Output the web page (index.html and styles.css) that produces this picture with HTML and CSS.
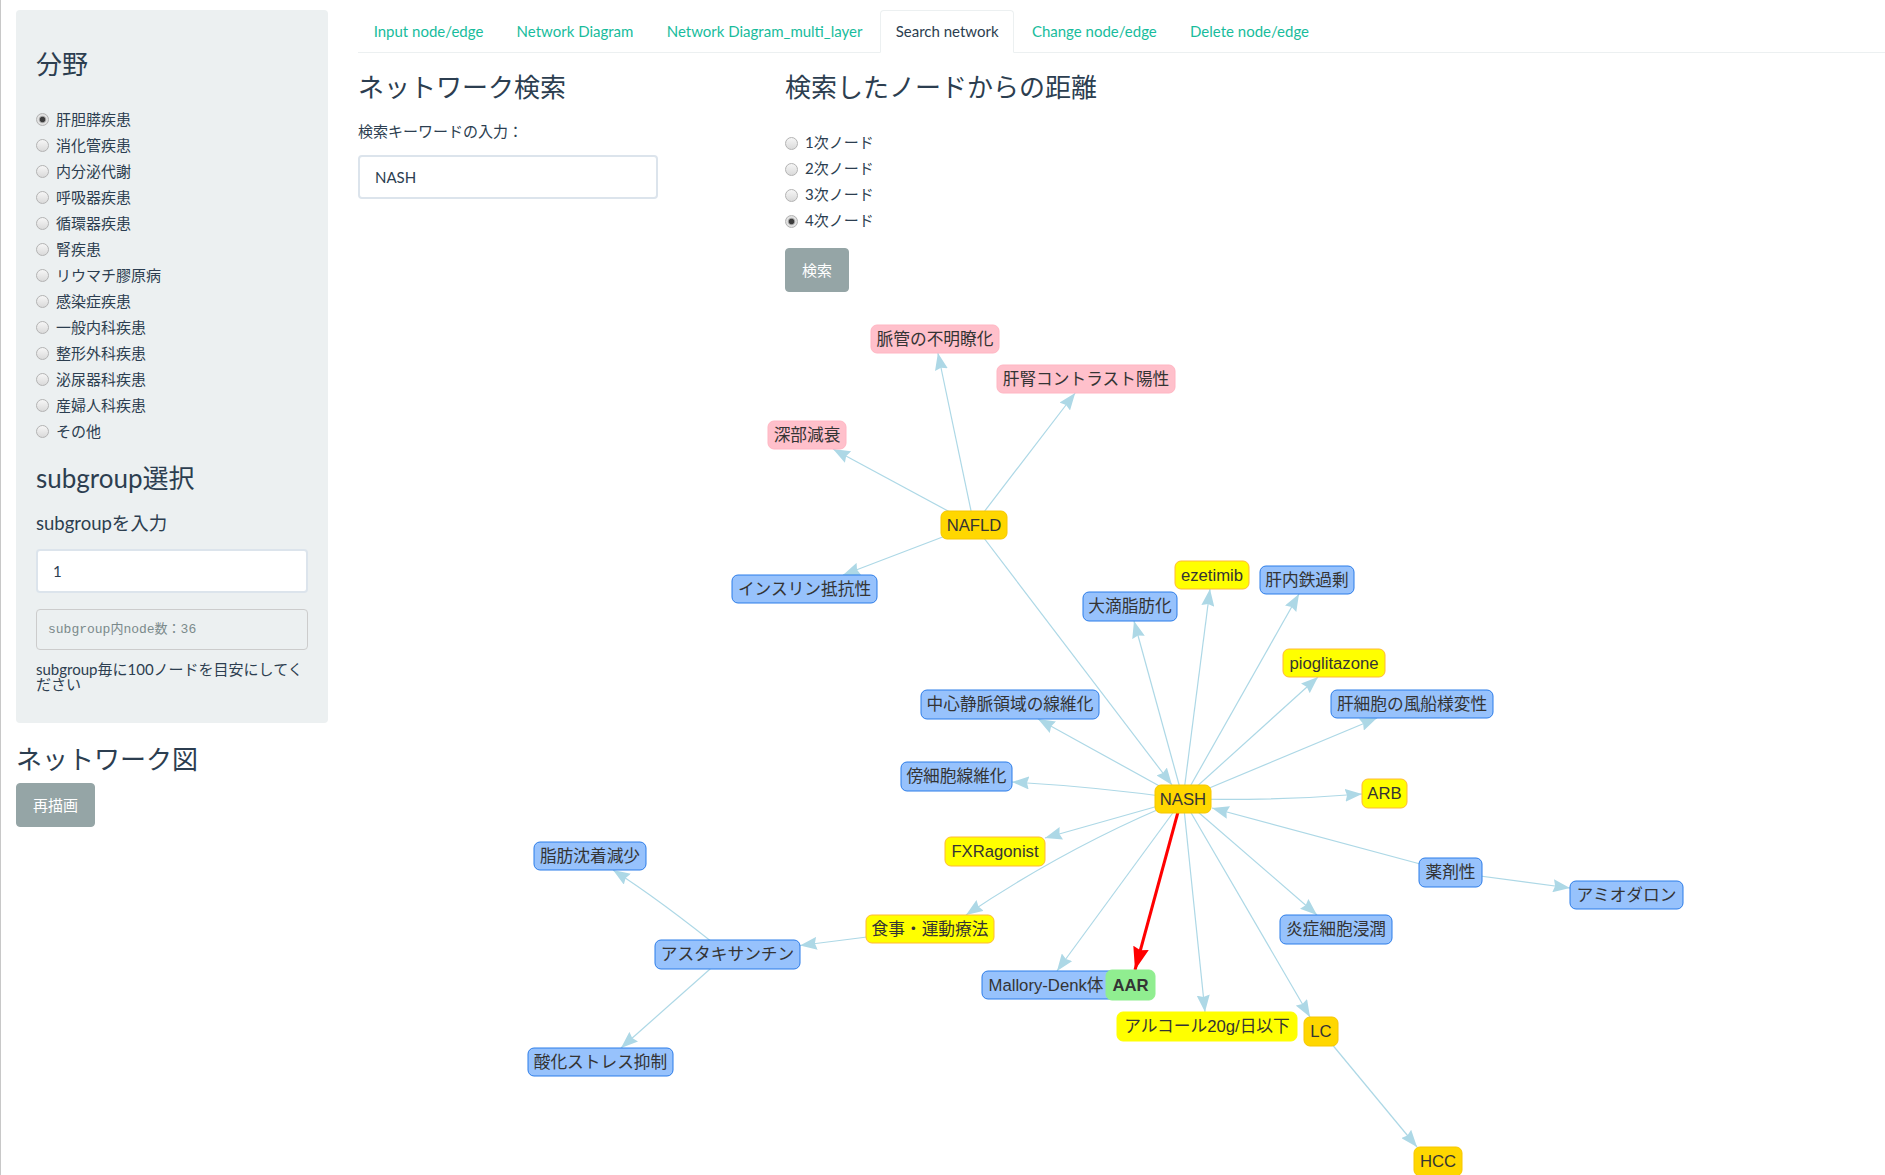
FILE: index.html
```html
<!DOCTYPE html>
<html lang="ja">
<head>
<meta charset="utf-8">
<title>Search network</title>
<link rel="stylesheet" href="styles.css">
</head>
<body>
<div class="page">
  <aside class="sidebar">
    <form class="well">
      <h3 class="well-title">分野</h3>
      <div class="side-radios">
        <label class="radio"><input type="radio" name="field" checked><span>肝胆膵疾患</span></label>
        <label class="radio"><input type="radio" name="field"><span>消化管疾患</span></label>
        <label class="radio"><input type="radio" name="field"><span>内分泌代謝</span></label>
        <label class="radio"><input type="radio" name="field"><span>呼吸器疾患</span></label>
        <label class="radio"><input type="radio" name="field"><span>循環器疾患</span></label>
        <label class="radio"><input type="radio" name="field"><span>腎疾患</span></label>
        <label class="radio"><input type="radio" name="field"><span>リウマチ膠原病</span></label>
        <label class="radio"><input type="radio" name="field"><span>感染症疾患</span></label>
        <label class="radio"><input type="radio" name="field"><span>一般内科疾患</span></label>
        <label class="radio"><input type="radio" name="field"><span>整形外科疾患</span></label>
        <label class="radio"><input type="radio" name="field"><span>泌尿器科疾患</span></label>
        <label class="radio"><input type="radio" name="field"><span>産婦人科疾患</span></label>
        <label class="radio"><input type="radio" name="field"><span>その他</span></label>
      </div>
      <h3 class="sub-title">subgroup選択</h3>
      <label class="big-label">subgroupを入力</label>
      <input class="form-control side-input" type="text" value="1">
      <pre class="verb">subgroup内node数：36</pre>
      <p class="note">subgroup毎に100ノードを目安にしてください</p>
    </form>
    <h3 class="side-head">ネットワーク図</h3>
    <button class="btn" type="button">再描画</button>
  </aside>

  <main class="main">
    <ul class="tabs">
      <li><a href="#">Input node/edge</a></li>
      <li><a href="#">Network Diagram</a></li>
      <li><a href="#">Network Diagram_multi_layer</a></li>
      <li class="active"><a href="#">Search network</a></li>
      <li><a href="#">Change node/edge</a></li>
      <li><a href="#">Delete node/edge</a></li>
    </ul>

    <div class="search-row">
      <div class="col-left">
        <h3 class="col-title">ネットワーク検索</h3>
        <label class="kw-label">検索キーワードの入力：</label>
        <input class="form-control kw-input" type="text" value="NASH">
      </div>
      <div class="col-right">
        <h3 class="col-title">検索したノードからの距離</h3>
        <div class="dist-radios">
          <label class="radio"><input type="radio" name="dist"><span>1次ノード</span></label>
          <label class="radio"><input type="radio" name="dist"><span>2次ノード</span></label>
          <label class="radio"><input type="radio" name="dist"><span>3次ノード</span></label>
          <label class="radio"><input type="radio" name="dist" checked><span>4次ノード</span></label>
        </div>
        <button class="btn search-btn" type="button">検索</button>
      </div>
    </div>

    <svg class="network" width="1527" height="875" viewBox="358 300 1527 875" xmlns="http://www.w3.org/2000/svg">
      <defs>
        <marker id="arr" viewBox="0 -6.5 17 13" refX="17" refY="0" markerWidth="17" markerHeight="13" markerUnits="userSpaceOnUse" orient="auto">
          <path d="M0,-6.5 L17,0 L0,6.5 L2,0 Z" class="arrow-head"/>
        </marker>
        <marker id="arr-red" viewBox="0 -8 23 16" refX="23" refY="0" markerWidth="23" markerHeight="16" markerUnits="userSpaceOnUse" orient="auto">
          <path d="M0,-8 L23,0 L0,8 L2.5,0 Z" class="arrow-red"/>
        </marker>
      </defs>

      <g class="edges">
        <line class="edge" x1="974" y1="525" x2="937.9" y2="353"/>
        <line class="edge" x1="974" y1="525" x2="1075.2" y2="393"/>
        <line class="edge" x1="974" y1="525" x2="833" y2="449"/>
        <line class="edge" x1="974" y1="525" x2="843" y2="575"/>
        <line class="edge" x1="974" y1="525" x2="1172" y2="785"/>
        <line class="edge" x1="1183" y1="799" x2="1134" y2="621"/>
        <line class="edge" x1="1183" y1="799" x2="1210" y2="589"/>
        <line class="edge" x1="1183" y1="799" x2="1299" y2="594"/>
        <line class="edge" x1="1183" y1="799" x2="1318" y2="677"/>
        <line class="edge" x1="1183" y1="799" x2="1377" y2="718"/>
        <path class="edge" d="M1183,799 Q1275,801 1362,794"/>
        <line class="edge" x1="1183" y1="799" x2="1038" y2="719"/>
        <path class="edge" d="M1183,799 Q1100,787 1012,782"/>
        <line class="edge" x1="1450" y1="872" x2="1212" y2="808"/>
        <line class="edge" x1="1450" y1="872" x2="1570" y2="888"/>
        <line class="edge" x1="1183" y1="799" x2="1045" y2="838"/>
        <path class="edge" d="M1183,799 Q1070,845 966,915"/>
        <line class="edge" x1="1183" y1="799" x2="1057" y2="971"/>
        <line class="edge" x1="1183" y1="799" x2="1205" y2="1012"/>
        <line class="edge" x1="1183" y1="799" x2="1310" y2="1017"/>
        <line class="edge" x1="1183" y1="799" x2="1317" y2="915"/>
        <line class="edge" x1="930" y1="929" x2="800" y2="945.5"/>
        <path class="edge" d="M727,954 Q660,900 613,870"/>
        <line class="edge" x1="727" y1="954" x2="621" y2="1048"/>
        <line class="edge" x1="1321" y1="1031" x2="1417" y2="1147"/>
        <line class="edge-red" x1="1178" y1="812" x2="1135" y2="970"/>
      </g>

      <g class="nodes">
        <g class="node pink"><rect x="871" y="325" width="128" height="28" rx="6"/><text x="935" y="339">脈管の不明瞭化</text></g>
        <g class="node pink"><rect x="997" y="365" width="178" height="28" rx="6"/><text x="1086" y="379">肝腎コントラスト陽性</text></g>
        <g class="node pink"><rect x="768" y="421" width="78" height="28" rx="6"/><text x="807" y="435">深部減衰</text></g>
        <g class="node gold"><rect x="941" y="511" width="66" height="28" rx="6"/><text x="974" y="525">NAFLD</text></g>
        <g class="node blue"><rect x="732" y="575" width="145" height="28" rx="6"/><text x="804.5" y="589">インスリン抵抗性</text></g>
        <g class="node blue"><rect x="1083" y="592" width="94" height="29" rx="6"/><text x="1130" y="606.5">大滴脂肪化</text></g>
        <g class="node yel"><rect x="1175" y="561" width="74" height="28" rx="6"/><text x="1212" y="575">ezetimib</text></g>
        <g class="node blue"><rect x="1260" y="566" width="94" height="28" rx="6"/><text x="1307" y="580">肝内鉄過剰</text></g>
        <g class="node yel"><rect x="1283" y="649" width="102" height="28" rx="6"/><text x="1334" y="663">pioglitazone</text></g>
        <g class="node blue"><rect x="921" y="690" width="178" height="29" rx="6"/><text x="1010" y="704.5">中心静脈領域の線維化</text></g>
        <g class="node blue"><rect x="1331" y="690" width="162" height="28" rx="6"/><text x="1412" y="704">肝細胞の風船様変性</text></g>
        <g class="node blue"><rect x="901" y="762" width="111" height="29" rx="6"/><text x="956.5" y="776.5">傍細胞線維化</text></g>
        <g class="node gold"><rect x="1155" y="785" width="56" height="28" rx="6"/><text x="1183" y="799">NASH</text></g>
        <g class="node yel"><rect x="1362" y="779" width="45" height="29" rx="6"/><text x="1384.5" y="793.5">ARB</text></g>
        <g class="node blue"><rect x="1419" y="858" width="63" height="29" rx="6"/><text x="1450.5" y="872.5">薬剤性</text></g>
        <g class="node blue"><rect x="1570" y="881" width="113" height="28" rx="6"/><text x="1626.5" y="895">アミオダロン</text></g>
        <g class="node blue"><rect x="534" y="842" width="112" height="28" rx="6"/><text x="590" y="856">脂肪沈着減少</text></g>
        <g class="node yel"><rect x="945" y="837" width="100" height="29" rx="6"/><text x="995" y="851.5">FXRagonist</text></g>
        <g class="node yel"><rect x="866" y="915" width="128" height="28" rx="6"/><text x="930" y="929">食事・運動療法</text></g>
        <g class="node blue"><rect x="655" y="940" width="145" height="29" rx="6"/><text x="727.5" y="954.5">アスタキサンチン</text></g>
        <g class="node blue"><rect x="982" y="971" width="134" height="28" rx="6"/><text x="1046" y="985">Mallory-Denk体</text></g>
        <g class="node green"><rect x="1106" y="970" width="49" height="30" rx="6"/><text class="bold" x="1130.5" y="985">AAR</text></g>
        <g class="node blue"><rect x="528" y="1048" width="145" height="28" rx="6"/><text x="600.5" y="1062">酸化ストレス抑制</text></g>
        <g class="node blue"><rect x="1280" y="915" width="112" height="29" rx="6"/><text x="1336" y="929.5">炎症細胞浸潤</text></g>
        <g class="node yel plain"><rect x="1117" y="1012" width="180" height="29" rx="6"/><text x="1207" y="1026.5">アルコール20g/日以下</text></g>
        <g class="node gold"><rect x="1304" y="1017" width="34" height="29" rx="6"/><text x="1321" y="1031.5">LC</text></g>
        <g class="node gold"><rect x="1414" y="1147" width="48" height="29" rx="6"/><text x="1438" y="1161.5">HCC</text></g>
      </g>
    </svg>
  </main>
</div>
</body>
</html>
```

FILE: styles.css
```css
html, body {
  margin: 0;
  padding: 0;
  overflow: hidden;
  background: #ffffff;
}

body {
  font-family: Lato, "Noto Sans CJK JP", sans-serif;
  font-size: 15px;
  line-height: 1.42857;
  color: #2c3e50;
  border-left: 1px solid #c8c8c8;
  height: 1175px;
  box-sizing: border-box;
}

.page {
  display: grid;
  grid-template-columns: 342px 1fr;
  align-items: start;
}

/* ---------- sidebar ---------- */
.sidebar {
  padding: 10px 15px 0 15px;
}

.well {
  margin: 0;
  background: #ecf0f1;
  border-radius: 4px;
  padding: 19px 20px;
}

h3 {
  font-family: Lato, "Noto Sans CJK JP", sans-serif;
  font-weight: 400;
  font-size: 26px;
  line-height: 28.6px;
  margin: 0;
  color: #2c3e50;
}

.well-title {
  margin-top: 21px;
}

.side-radios {
  margin-top: 28.4px;
}

.radio {
  display: flex;
  align-items: center;
  gap: 7px;
  height: 26px;
  font-size: 15px;
  color: #2c3e50;
  cursor: pointer;
}

.radio input {
  -webkit-appearance: none;
  appearance: none;
  margin: 0;
  width: 13px;
  height: 13px;
  flex: none;
  border-radius: 50%;
  border: 1px solid #b3b3b3;
  background: linear-gradient(#f6f6f6, #dadada);
  box-sizing: border-box;
}

.radio input:checked {
  background: radial-gradient(circle, #3d3d3d 0 2.4px, #9a9a9a 3px, #e4e4e4 4.2px, #d6d6d6 100%);
}

.sub-title {
  margin-top: 19px;
}

.big-label {
  display: block;
  font-size: 18.5px;
  line-height: 26px;
  margin-top: 17.5px;
}

.form-control {
  display: block;
  box-sizing: border-box;
  height: 44px;
  padding: 0 15px;
  font-family: Lato, "Noto Sans CJK JP", sans-serif;
  font-size: 15px;
  color: #2c3e50;
  background: #ffffff;
  border: 2px solid #dce4ec;
  border-radius: 4px;
  outline: none;
}

.side-input {
  width: 100%;
  margin-top: 13.4px;
}

.verb {
  margin: 16px 0 0 0;
  height: 41px;
  box-sizing: border-box;
  padding: 9px 11px;
  line-height: 21px;
  font-family: "Liberation Mono", "Noto Sans CJK JP", monospace;
  font-size: 13px;
  color: #7b8a8b;
  background: #ecf0f1;
  border: 1px solid #cccccc;
  border-radius: 4px;
  white-space: pre;
  overflow: hidden;
}

.note {
  margin: 11.3px 0 11.5px 0;
  line-height: 15.5px;
  font-size: 15px;
}

.side-head {
  margin-top: 21.3px;
}

.btn {
  display: inline-block;
  height: 44px;
  padding: 0 16px;
  line-height: 42px;
  font-family: Lato, "Noto Sans CJK JP", sans-serif;
  font-size: 15px;
  color: #ffffff;
  background: #95a5a6;
  border: 1px solid #95a5a6;
  border-radius: 4px;
  cursor: pointer;
}

.sidebar .btn {
  margin-top: 10px;
}

/* ---------- main ---------- */
.main {
  padding: 10px 0 0 15px;
  min-width: 0;
}

.tabs {
  display: flex;
  list-style: none;
  margin: 0;
  padding: 0;
  border-bottom: 1px solid #ecf0f1;
}

.tabs li {
  margin-bottom: -1px;
}

.tabs a {
  display: block;
  padding: 10px 14.65px;
  margin-right: 2px;
  line-height: 21.43px;
  font-size: 15px;
  color: #18bc9c;
  text-decoration: none;
  border: 1px solid transparent;
  border-radius: 4px 4px 0 0;
}

.tabs li.active a {
  color: #2c3e50;
  background: #ffffff;
  border-color: #ecf0f1 #ecf0f1 transparent;
}

.search-row {
  display: grid;
  grid-template-columns: 427px 1fr;
  align-items: start;
}

.col-title {
  margin-top: 20px;
}

.kw-label {
  display: block;
  font-size: 15px;
  line-height: 21.43px;
  margin-top: 18.5px;
}

.kw-input {
  width: 300px;
  margin-top: 13px;
}

.dist-radios {
  margin-top: 28px;
}

.search-btn {
  margin-top: 13.8px;
}

.network {
  display: block;
  margin-top: 8.5px;
  overflow: hidden;
}

/* ---------- network diagram ---------- */
.edge {
  fill: none;
  stroke: #add8e6;
  stroke-width: 1.2;
  marker-end: url(#arr);
}

.edge-red {
  stroke: #ff0000;
  stroke-width: 3;
  marker-end: url(#arr-red);
}

.arrow-head {
  fill: #add8e6;
}

.arrow-red {
  fill: #ff0000;
}

.node rect {
  stroke-width: 1;
}

.node text {
  font-family: "Liberation Sans", "Noto Sans CJK JP", sans-serif;
  font-size: 16.7px;
  fill: #343434;
  text-anchor: middle;
  dominant-baseline: central;
}

.node text.bold {
  font-weight: 700;
}

.pink rect {
  fill: #ffc0cb;
  stroke: #ffb6c3;
}

.gold rect {
  fill: #ffd700;
  stroke: #f7c600;
}

.yel rect {
  fill: #ffff00;
  stroke: #ffb935;
}

.yel.plain rect {
  stroke: #ffff00;
}

.blue rect {
  fill: #97c2fc;
  stroke: #2b7ce9;
}

.green rect {
  fill: #90ee90;
  stroke: #90ee90;
}
```
